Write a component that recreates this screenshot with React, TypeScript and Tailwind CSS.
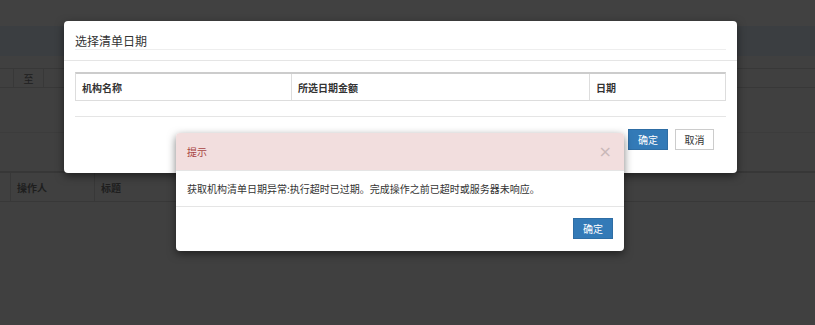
import React from "react";

const font = { fontFamily: '"Noto Sans CJK SC", "Noto Sans", sans-serif' };

export default function App() {
  return (
    <div className="relative w-[815px] h-[325px] overflow-hidden bg-[#404040]" style={font}>
      {/* background page under overlay */}
      <div className="h-[26px] bg-[#414141]" />
      <div className="h-[30px] bg-[#3b3e41]" />
      <div className="h-[12px]" />
      <div className="flex h-[20px] border-y border-[#383838] text-[10px] text-[#1e1e1e]">
        <div className="w-[14px] border-r border-[#383838]" />
        <div className="w-[30px] border-r border-[#383838] flex items-center justify-center">至</div>
        <div className="flex-1" />
      </div>
      <div className="h-[45px] border-b border-[#3c3c3c]" />
      <div className="h-[40px] border-b-2 border-[#373737]" />
      <div className="flex h-[29px] border-b border-[#383838] text-[10px] font-bold text-[#1e1e1e]">
        <div className="w-[11px] border-r border-[#383838]" />
        <div className="w-[84px] border-r border-[#383838] flex items-center pl-[6px]">操作人</div>
        <div className="flex items-center pl-[6px]">标题</div>
      </div>

      {/* Dialog 1 */}
      <div className="absolute left-[64px] top-[21px] w-[673px] h-[152px] bg-white rounded-[4px] shadow-[0_3px_9px_rgba(0,0,0,0.5)] flex flex-col">
        <div className="h-[40px] border-b border-[#e5e5e5] px-[11px] pt-[10px]">
          <div className="h-[19px] border-b border-[#eeeeee] text-[12px] leading-[19px] text-[#333]">选择清单日期</div>
        </div>
        <div className="px-[11px] pt-[11px]">
          <div className="flex h-[29px] border-t-2 border-[#cccccc] border-x border-b border-x-[#dddddd] border-b-[#dddddd] text-[10px] font-bold text-[#333]">
            <div className="w-[216px] border-r border-[#dddddd] flex items-center pl-[6px]">机构名称</div>
            <div className="w-[298px] border-r border-[#dddddd] flex items-center pl-[6px]">所选日期金额</div>
            <div className="flex-1 flex items-center pl-[6px]">日期</div>
          </div>
          <div className="h-[16px] border-b border-[#e5e5e5]" />
        </div>
        <div className="flex justify-end gap-[7px] pr-[23px] pt-[12px]">
          <div className="w-[40px] h-[21px] bg-[#337ab7] border border-[#2e6da4] text-white text-[10px] flex items-center justify-center">确定</div>
          <div className="w-[39px] h-[21px] bg-white border border-[#cccccc] text-[#333] text-[10px] flex items-center justify-center">取消</div>
        </div>
      </div>

      {/* Dialog 2 */}
      <div className="absolute left-[176px] top-[133px] w-[448px] h-[118px] bg-white rounded-[4px] shadow-[0_3px_9px_rgba(0,0,0,0.5)] flex flex-col overflow-hidden">
        <div className="h-[38px] bg-[#f2dede] border-b border-[#e5e5e5] flex items-center justify-between pl-[11px] pr-[12px]">
          <span className="text-[10px] text-[#a94442]">提示</span>
          <span className="text-[16px] leading-none text-[#c9b8b8]" style={{ fontFamily: '"DejaVu Sans", sans-serif' }}>×</span>
        </div>
        <div className="h-[36px] border-b border-[#e5e5e5] flex items-center pl-[11px] text-[10px] text-[#333]">
          获取机构清单日期异常:执行超时已过期。完成操作之前已超时或服务器未响应。
        </div>
        <div className="flex-1 flex justify-end items-start pt-[11px] pr-[11px]">
          <div className="w-[40px] h-[21px] bg-[#337ab7] border border-[#2e6da4] text-white text-[10px] flex items-center justify-center">确定</div>
        </div>
      </div>
    </div>
  );
}
